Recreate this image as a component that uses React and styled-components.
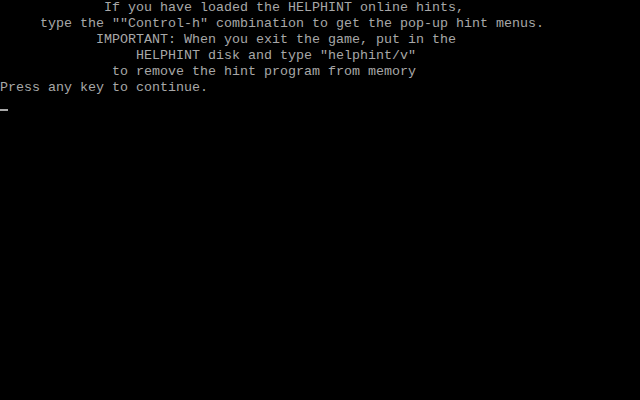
import React from 'react';
import styled, { createGlobalStyle } from 'styled-components';

const Global = createGlobalStyle`
  html, body {
    margin: 0;
    padding: 0;
    background: #000;
  }
`;

const lines = [
  { col: 13, text: 'If you have loaded the HELPHINT online hints,' },
  { col: 5, text: 'type the ""Control-h" combination to get the pop-up hint menus.' },
  { col: 12, text: 'IMPORTANT: When you exit the game, put in the' },
  { col: 17, text: 'HELPHINT disk and type "helphint/v"' },
  { col: 14, text: 'to remove the hint program from memory' },
  { col: 0, text: 'Press any key to continue.' },
];

const App = () => {
  return (
    <Screen>
      <Global />
      {lines.map((l, idx) => (
        <Row key={idx} $col={l.col}>{l.text}</Row>
      ))}
      <Row $col={0}>
        <Cursor />
      </Row>
    </Screen>
  );
};

const Screen = styled.div`
  width: 640px;
  height: 400px;
  background: #000;
  color: #a8a8a8;
  font-family: "Liberation Mono", "DejaVu Sans Mono", monospace;
  font-size: 13.333px;
  overflow: hidden;
`;

const Row = styled.div`
  height: 16px;
  line-height: 16px;
  white-space: pre;
  padding-left: ${(p) => p.$col * 8}px;
  position: relative;
`;

const Cursor = styled.span`
  display: block;
  width: 8px;
  height: 2px;
  margin-top: 13px;
  background: #a8a8a8;
`;

export default App;
